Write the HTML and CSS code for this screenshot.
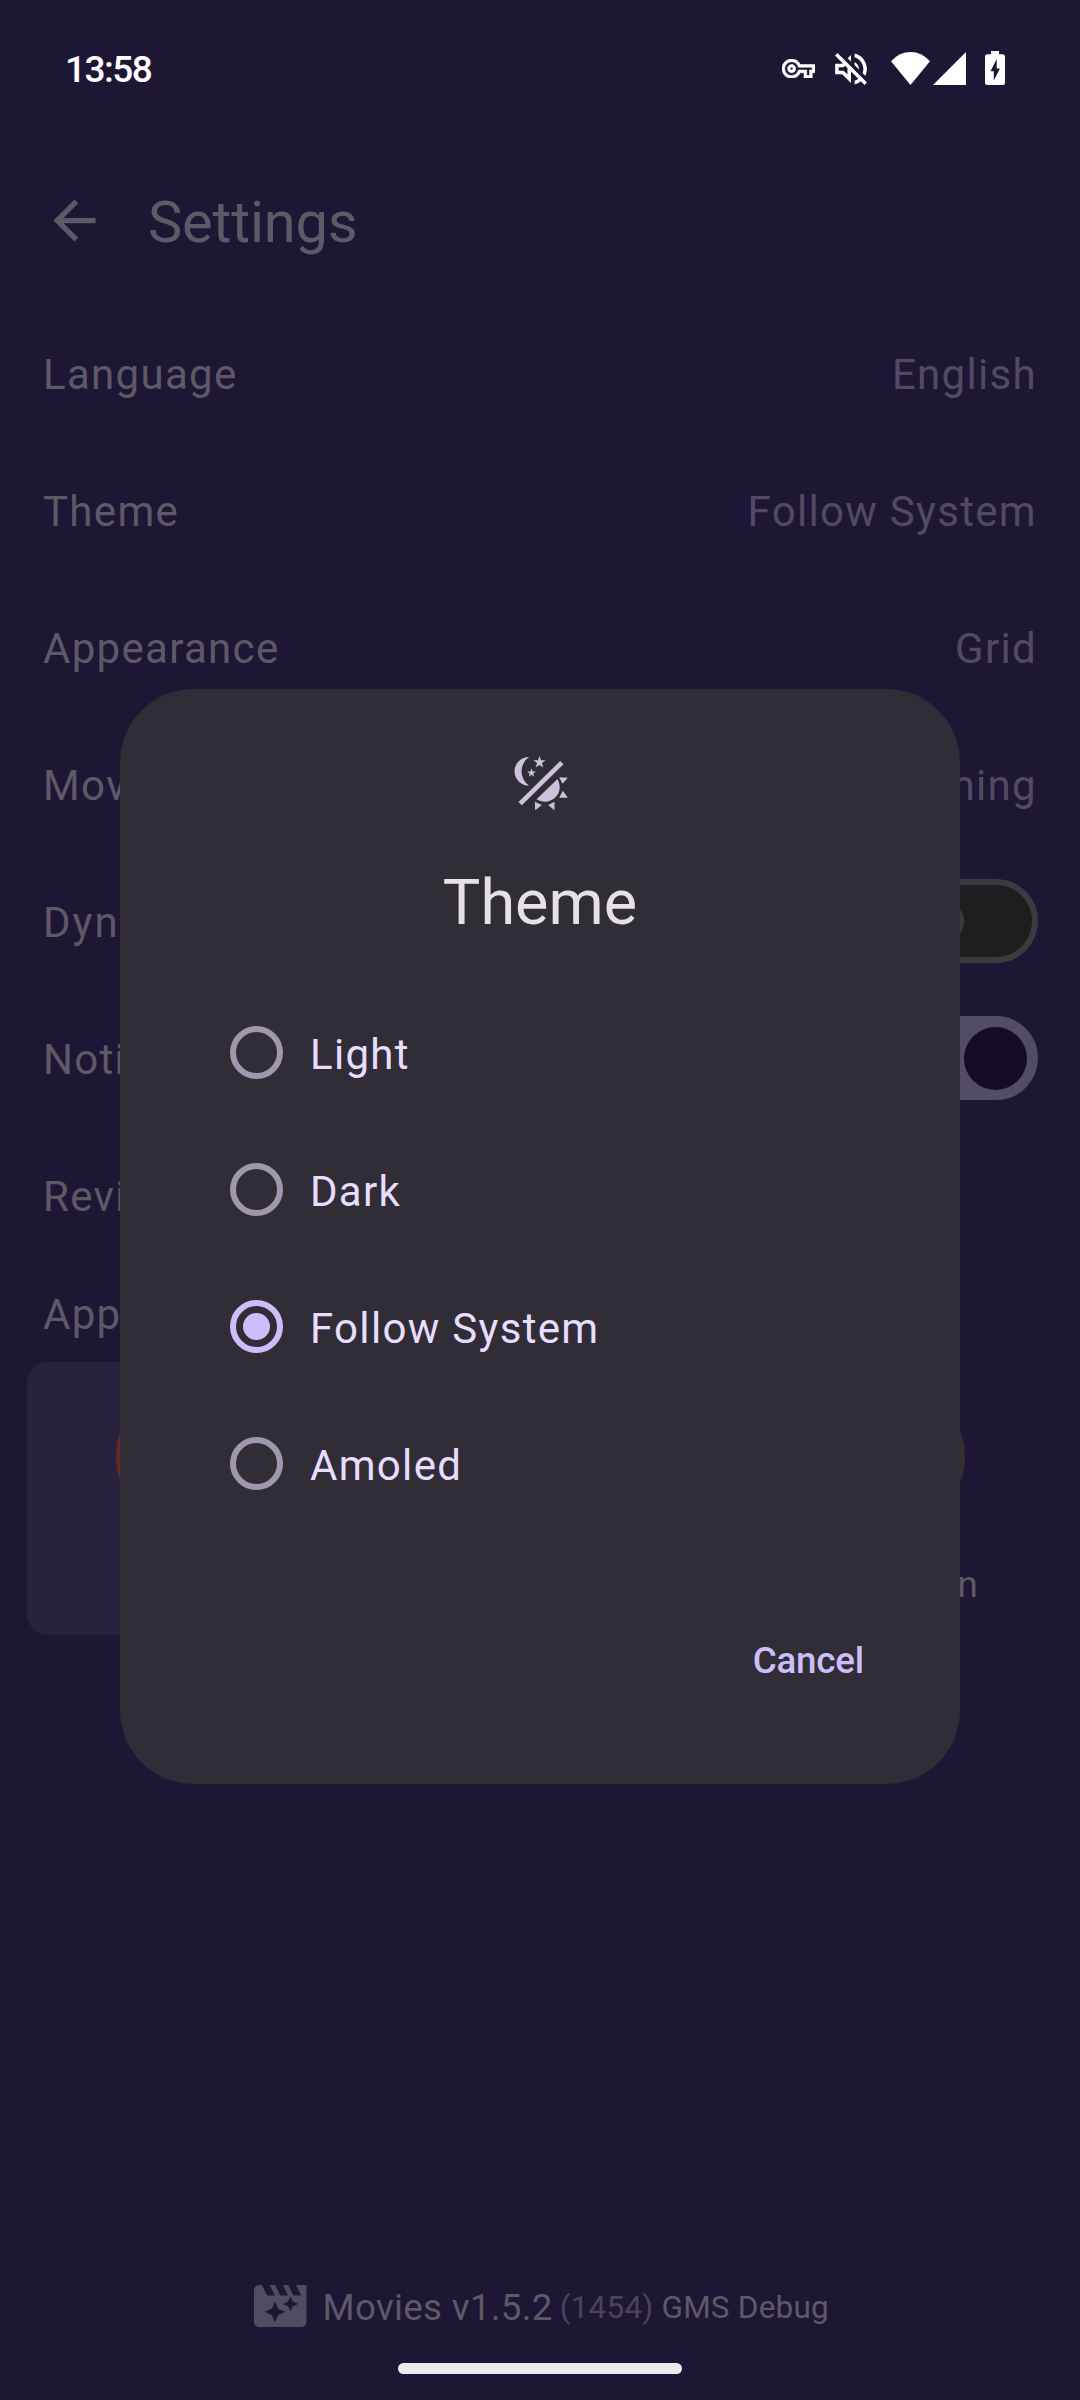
FILE: index.html
```html
<!DOCTYPE html>
<html lang="en">
<head>
<meta charset="utf-8">
<title>Settings</title>
<link rel="stylesheet" href="styles.css">
</head>
<body>
<div class="screen">
  <header class="status">
    <span class="clock">13:58</span>
    <div class="status-icons">
      <svg class="key" viewBox="0 5 24 14"><path d="M22 19h-6v-4h-2.68c-1.14 2.42-3.6 4-6.32 4-3.86 0-7-3.14-7-7s3.14-7 7-7c2.72 0 5.17 1.58 6.32 4H24v6h-2v4zm-4-2h2v-4h2v-2H11.94l-.23-.67C11.01 8.34 9.11 7 7 7c-2.76 0-5 2.24-5 5s2.24 5 5 5c2.11 0 4.01-1.34 4.71-3.33l.23-.67H18v4zM7 15c-1.65 0-3-1.35-3-3s1.35-3 3-3 3 1.35 3 3-1.35 3-3 3zm0-4c-.55 0-1 .45-1 1s.45 1 1 1 1-.45 1-1-.45-1-1-1z"/></svg>
      <svg class="mute" viewBox="2.93 2.93 18.14 18.14"><path d="M4.34 2.93L2.93 4.34 7.29 8.7 7 9H3v6h4l5 5v-6.59l4.18 4.18c-.65.49-1.38.88-2.18 1.11v2.06c1.34-.3 2.57-.92 3.61-1.75l2.05 2.05 1.41-1.41L4.34 2.93zM10 15.17L7.83 13H5v-2h2.83l.88-.88L10 11.41v3.76zM19 12c0 .82-.15 1.61-.41 2.34l1.53 1.53c.56-1.17.88-2.48.88-3.87 0-4.28-2.99-7.86-7-8.77v2.06c2.89.86 5 3.54 5 6.71zm-7-8l-1.88 1.88L12 7.76zm4.5 8c0-1.77-1.02-3.29-2.5-4.03v1.79l2.48 2.48c.01-.08.02-.16.02-.24z"/></svg>
      <svg class="wifi" viewBox="0 0 39 33"><path d="M19.5 33L0 9.200Q8.500 0 19.500 0T39 9.200z"/></svg>
      <svg class="cell" viewBox="0 0 33 33"><path d="M33 0V33H0z"/></svg>
      <svg class="battery" viewBox="0 0 20 34"><path fill-rule="evenodd" d="M6 0H14V3.300H17.500Q20 3.300 20 5.800V31.500Q20 34 17.500 34H2.500Q0 34 0 31.500V5.800Q0 3.300 2.500 3.300H6zM11.700 8L5.500 20.300H8.800V29.500L15 17.500H11.700z"/></svg>
    </div>
  </header>

  <div class="appbar">
    <svg class="back" viewBox="0 0 24 24"><path d="M20 11H7.830l5.590-5.590L12 4l-8 8 8 8 1.410-1.410L7.830 13H20v-2z"/></svg>
    <h1>Settings</h1>
  </div>

  <main class="settings">
    <div class="row"><span>Language</span><span class="value">English</span></div>
    <div class="row"><span>Theme</span><span class="value">Follow System</span></div>
    <div class="row"><span>Appearance</span><span class="value">Grid</span></div>
    <div class="row"><span>Movies</span><span class="value">Upcoming</span></div>
    <div class="row"><span class="wide">Dynamic Colors</span><span class="switch"><i class="thumb"></i></span></div>
    <div class="row"><span>Notifications</span><span class="switch on"><i class="thumb"></i></span></div>
    <div class="row"><span>Review</span></div>
    <h2>App Icon</h2>
    <div class="icons">
      <div class="icon-card selected"><i class="disc red"></i><span>Red</span></div>
      <div class="icon-card"><i class="disc purple"></i><span>Purple</span></div>
      <div class="icon-card"><i class="disc brown"></i><span>Halloween</span></div>
    </div>
  </main>

  <footer class="version">
    <svg class="movie" viewBox="2 4 20 16"><path fill-rule="evenodd" d="M18 4l2 4h-3l-2-4h-2l2 4h-3l-2-4H8l2 4H7L5 4H4c-1.100 0-1.990.9-1.990 2L2 18c0 1.100.9 2 2 2h16c1.100 0 2-.9 2-2V4h-4zM10 10.200L8.800 13 6.050 14.200 8.800 15.400 10 18.200 11.200 15.400 13.950 14.200 11.200 13zM15.900 8.300L15 10.300 13 11.200 15 12.100 15.900 14.100 16.800 12.100 18.800 11.200 16.800 10.300z"/></svg>
    <span class="name">Movies v1.5.2</span>
    <span class="build">(1454)</span>
    <span class="flavor">GMS Debug</span>
  </footer>
  <div class="home"></div>

  <section class="dialog" role="dialog">
    <svg class="theme-icon" viewBox="85.5 66 189 189">
      <path d="M146 81A44 43 0 0 0 146 167A51.700 51.700 0 0 1 146 81z"/>
      <path d="M177 78l4.600 12.700 13.500.4-10.700 8.200 3.800 13-11.200-7.600-11.200 7.600 3.800-13-10.700-8.200 13.500-.4z"/>
      <path d="M153 115l3.400 9.300 9.900.3-7.800 6.100 2.700 9.500-8.200-5.600-8.200 5.600 2.700-9.500-7.800-6.100 9.900-.3z"/>
      <path d="M239 93L249 103 124 226 114 216z"/>
      <path d="M231 147C241 166 240 187 225 202C209 217 187 220 168 208z"/>
      <path d="M236 142L262 143 246 161zM247 182L262 203 236 203zM163 215L184 225 164 241zM203 225L222 215 222 241z"/>
    </svg>
    <h3>Theme</h3>
    <div class="options">
      <label class="option"><i class="radio"></i><span>Light</span></label>
      <label class="option"><i class="radio"></i><span>Dark</span></label>
      <label class="option"><i class="radio checked"></i><span>Follow System</span></label>
      <label class="option"><i class="radio"></i><span>Amoled</span></label>
    </div>
    <button class="cancel">Cancel</button>
  </section>
</div>
</body>
</html>
```

FILE: styles.css
```css
* { box-sizing: border-box; }
body { margin: 0; background: #1e1635; }
h1, h2, h3 { margin: 0; font-weight: 400; }
svg { display: block; flex: none; fill: currentColor; }
i { display: block; flex: none; }

.screen {
  position: relative;
  display: flex;
  flex-direction: column;
  width: 1080px;
  height: 2400px;
  overflow: hidden;
  background: #1e1635;
  color: #5e5966;
  font-family: Roboto, "Liberation Sans", sans-serif;
  font-size: 42px;
  letter-spacing: 1.31px;
}

.status {
  display: flex;
  justify-content: space-between;
  align-items: center;
  height: 136px;
  padding: 0 75px 0 65px;
  color: #fff;
}
.clock { margin-top: 2px; font-size: 37px; font-weight: 500; letter-spacing: -1.5px; }
.status-icons { display: flex; align-items: center; }
.key { width: 33px; height: 19.25px; margin: 1px 20px 0 0; stroke: currentColor; stroke-width: 0.4; }
.mute { width: 32px; height: 32px; margin: 2px 24px 0 0; }
.wifi { width: 39px; height: 33px; margin-right: 3px; }
.cell { width: 33px; height: 33px; margin-right: 19px; }
.battery { width: 20px; height: 34px; }

.appbar {
  display: flex;
  align-items: center;
  height: 170px;
  padding: 0 43px 2px;
  gap: 42px;
}
.back { width: 63px; height: 63px; }
.appbar h1 { margin-top: 3px; font-size: 57.75px; letter-spacing: -0.2px; }

.row {
  display: flex;
  justify-content: space-between;
  align-items: center;
  height: 137px;
  padding: 0 42px 0 43px;
}
.wide { letter-spacing: 2px; }
.value { margin-right: 1px; color: #524a62; }
.switch {
  display: flex;
  align-items: center;
  width: 136.5px;
  height: 84px;
  margin-top: -3px;
  padding-left: 14px;
  border: 6px solid #3b3a3e;
  border-radius: 42px;
  background: #1e1e20;
}
.switch .thumb { width: 42px; height: 42px; border-radius: 50%; background: #3b3a3e; }
.switch.on { justify-content: flex-end; padding: 0 5px 0 0; border-color: #534c66; background: #534c66; }
.switch.on .thumb { width: 63px; height: 63px; background: #150a29; }

.settings h2 { height: 97px; padding-left: 43px; font-size: 42px; line-height: 100px; }
.icons { display: grid; grid-template-columns: repeat(3, 1fr); gap: 27px; padding: 0 26px 0 27px; }
.icon-card {
  display: flex;
  flex-direction: column;
  align-items: center;
  height: 273px;
  padding-top: 21px;
  border-radius: 21px;
  font-size: 36.75px;
  letter-spacing: 0;
}
.icon-card.selected { background: #282140; }
.disc { width: 147px; height: 147px; margin-bottom: 33px; border-radius: 50%; }
.red { background: #672924; }
.purple { background: #524a62; }
.brown { background: #362d2c; }

.version {
  display: flex;
  align-items: center;
  justify-content: center;
  margin-top: auto;
  height: 60px;
  padding-left: 3px;
  letter-spacing: 0;
  white-space: nowrap;
}
.movie { width: 52.5px; height: 42px; margin: -3px 16px 0 0; color: #524c63; }
.name { margin-right: 7px; font-size: 36.75px; letter-spacing: 0.3px; }
.build { margin-right: 8px; font-size: 31.5px; letter-spacing: 0.2px; color: #4b4260; }
.flavor { font-size: 31.5px; letter-spacing: 0.2px; }
.home { width: 284px; height: 11px; margin: 26px auto; border-radius: 6px; background: #ececf0; }

.dialog {
  position: absolute;
  left: 120px;
  top: 689px;
  display: flex;
  flex-direction: column;
  width: 840px;
  height: 1095px;
  padding: 63px;
  border-radius: 73.5px;
  background: #302d37;
  color: #e8ddff;
}
.theme-icon { align-self: center; width: 63px; height: 63px; color: #cbc3dc; }
.dialog h3 { margin-top: 46px; text-align: center; font-size: 63px; line-height: 84px; letter-spacing: 0; color: #e6e1e6; }
.options { margin-top: 39px; }
.option { display: flex; align-items: center; height: 137px; padding-left: 47px; gap: 27px; }
.option span { margin-top: 4px; }
.radio {
  display: grid;
  place-items: center;
  width: 53px;
  height: 53px;
  border: 6px solid #9f98ad;
  border-radius: 50%;
}
.radio.checked { border-color: #cdbdfa; }
.radio.checked::before { content: ""; width: 27px; height: 27px; border-radius: 50%; background: #cdbdfa; }
.cancel {
  align-self: flex-end;
  margin-top: 76px;
  padding: 0 33px;
  height: 105px;
  border: 0;
  background: none;
  color: #cdbdfa;
  font: 500 36.75px Roboto, "Liberation Sans", sans-serif;
  letter-spacing: -0.2px;
}
```
